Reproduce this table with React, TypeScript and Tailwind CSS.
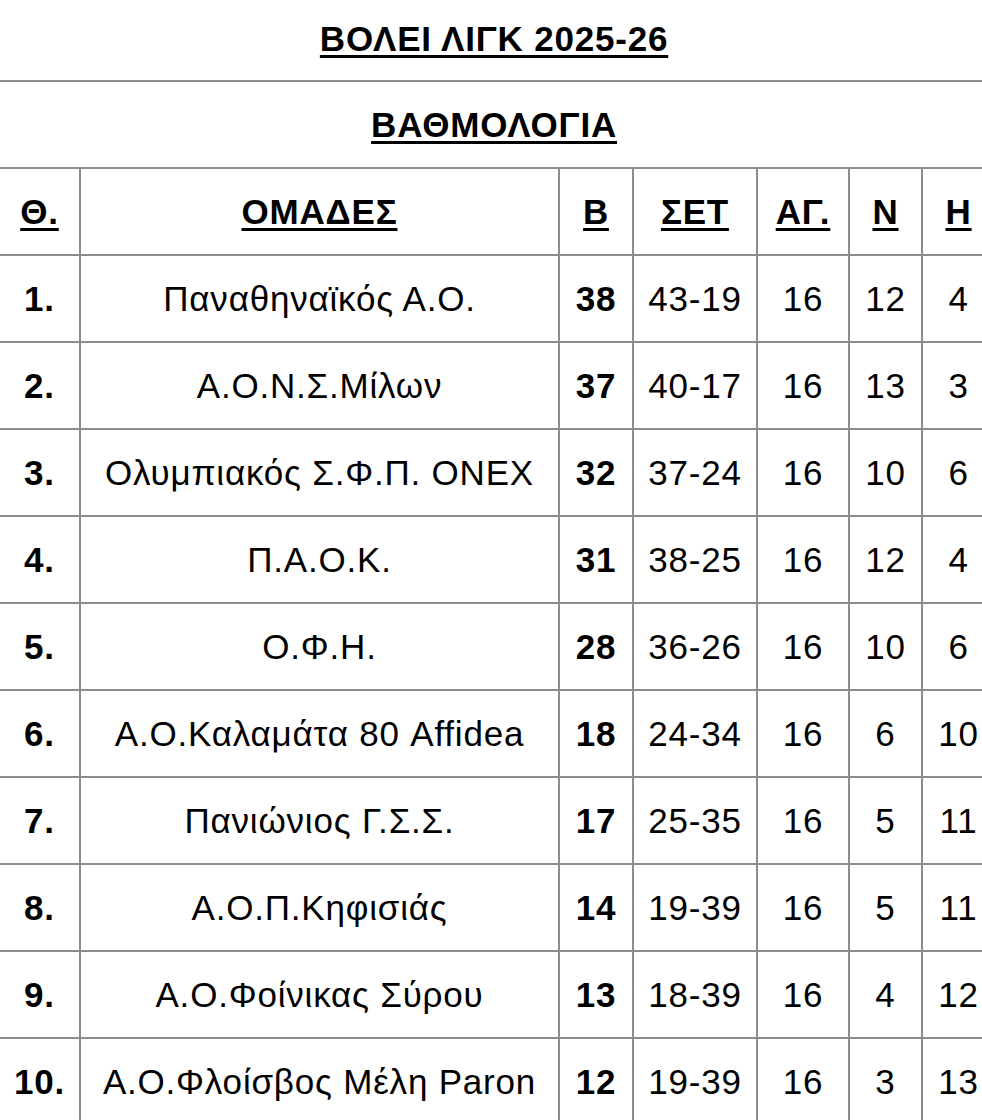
const rows: [string, string, string, string, string, string, string][] = [
  ['1.', 'Παναθηναϊκός Α.Ο.', '38', '43-19', '16', '12', '4'],
  ['2.', 'Α.Ο.Ν.Σ.Μίλων', '37', '40-17', '16', '13', '3'],
  ['3.', 'Ολυμπιακός Σ.Φ.Π. ΟΝΕΧ', '32', '37-24', '16', '10', '6'],
  ['4.', 'Π.Α.Ο.Κ.', '31', '38-25', '16', '12', '4'],
  ['5.', 'Ο.Φ.Η.', '28', '36-26', '16', '10', '6'],
  ['6.', 'Α.Ο.Καλαμάτα 80 Affidea', '18', '24-34', '16', '6', '10'],
  ['7.', 'Πανιώνιος Γ.Σ.Σ.', '17', '25-35', '16', '5', '11'],
  ['8.', 'Α.Ο.Π.Κηφισιάς', '14', '19-39', '16', '5', '11'],
  ['9.', 'Α.Ο.Φοίνικας Σύρου', '13', '18-39', '16', '4', '12'],
  ['10.', 'Α.Ο.Φλοίσβος Μέλη Paron', '12', '19-39', '16', '3', '13'],
];

const headers = ['Θ.', 'ΟΜΑΔΕΣ', 'Β', 'ΣΕΤ', 'ΑΓ.', 'Ν', 'Η'];

const cell = 'border-2 border-[#8c8c8c] h-[87px] p-0 text-center align-middle whitespace-nowrap';

export default function App() {
  return (
    <div className="w-[982px] h-[1120px] overflow-hidden bg-white text-black" style={{ fontFamily: '"Liberation Sans", Arial, sans-serif' }}>
      <table className="table-fixed border-collapse w-[996px] -ml-[2px] text-[35px] tracking-[0.8px] leading-none">
        <colgroup>
          <col className="w-[81px]" />
          <col className="w-[479px]" />
          <col className="w-[74px]" />
          <col className="w-[124px]" />
          <col className="w-[92px]" />
          <col className="w-[73px]" />
          <col className="w-[73px]" />
        </colgroup>
        <tbody>
          <tr>
            <td colSpan={7} className="border-b-2 border-[#8c8c8c] h-[81px] p-0 pb-[4px] pr-[6px] text-center align-middle">
              <span className="font-bold underline underline-offset-[4px] decoration-[3px]">ΒΟΛΕΙ ΛΙΓΚ 2025-26</span>
            </td>
          </tr>
          <tr>
            <td colSpan={7} className="border-b-2 border-[#8c8c8c] h-[87px] p-0 pr-[6px] text-center align-middle">
              <span className="font-bold underline underline-offset-[4px] decoration-[3px]">ΒΑΘΜΟΛΟΓΙΑ</span>
            </td>
          </tr>
          <tr>
            {headers.map((h) => (
              <td key={h} className={cell}>
                <span className="font-bold underline underline-offset-[4px] decoration-[3px]">{h}</span>
              </td>
            ))}
          </tr>
          {rows.map((r) => (
            <tr key={r[0]}>
              <td className={`${cell} font-bold`}>{r[0]}</td>
              <td className={cell}>{r[1]}</td>
              <td className={`${cell} font-bold`}>{r[2]}</td>
              <td className={cell}>{r[3]}</td>
              <td className={cell}>{r[4]}</td>
              <td className={cell}>{r[5]}</td>
              <td className={cell}>{r[6]}</td>
            </tr>
          ))}
        </tbody>
      </table>
    </div>
  );
}
